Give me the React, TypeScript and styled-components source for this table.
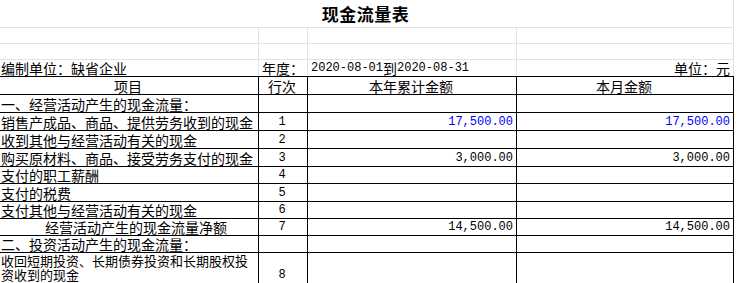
import React from "react";
import styled, { createGlobalStyle } from "styled-components";

const GlobalStyle = createGlobalStyle`
  body {
    margin: 0;
    background: #ffffff;
    font-family: "Noto Sans CJK SC", "Liberation Sans", sans-serif;
    color: #000000;
  }
`;

const GRID = "#e2e2e2";
const INK = "#000000";

const Sheet = styled.div`
  width: 734px;
  display: flex;
  flex-direction: column;
`;

const Row = styled.div<{ $h: number; $line: string }>`
  display: grid;
  grid-template-columns: 259px 49px 209px 217px;
  height: ${(p) => p.$h}px;
  border-bottom: 1px solid ${(p) => p.$line};
  box-sizing: border-box;
`;

const Cell = styled.div<{
  $line?: string;
  $align?: "left" | "center" | "right";
  $valign?: "start" | "center" | "end";
  $span?: boolean;
  $indent?: number;
}>`
  grid-column: ${(p) => (p.$span ? "1 / -1" : "auto")};
  display: flex;
  align-items: ${(p) => (p.$valign === "start" ? "flex-start" : p.$valign === "end" ? "flex-end" : "center")};
  justify-content: ${(p) => (p.$align === "center" ? "center" : p.$align === "right" ? "flex-end" : "flex-start")};
  border-right: 1px solid ${(p) => p.$line || INK};
  padding: 0 3px 0 ${(p) => (p.$indent ?? 1)}px;
  box-sizing: border-box;
  min-width: 0;
  white-space: nowrap;
  font-size: 14px;
  line-height: 16px;
`;

const Title = styled.span`
  font-size: 17px;
  font-weight: 700;
  letter-spacing: 0.5px;
  line-height: 20px;
`;

const Mono = styled.span<{ $blue?: boolean }>`
  font-family: "Liberation Mono", "Noto Sans CJK SC", monospace;
  font-size: 12px;
  line-height: 14px;
  color: ${(p) => (p.$blue ? "#0000ff" : INK)};
`;

const Wrap = styled.div`
  width: 254px;
  white-space: normal;
  word-break: break-all;
  font-size: 13px;
  line-height: 14px;
  padding-top: 1px;
`;

type Line = {
  label: string;
  no?: string;
  year?: string;
  month?: string;
  blue?: boolean;
  indent?: number;
  h: number;
};

const lines: Line[] = [
  { label: "一、经营活动产生的现金流量：", h: 18 },
  { label: "销售产成品、商品、提供劳务收到的现金", no: "1", year: "17,500.00", month: "17,500.00", blue: true, h: 18 },
  { label: "收到其他与经营活动有关的现金", no: "2", h: 18 },
  { label: "购买原材料、商品、接受劳务支付的现金", no: "3", year: "3,000.00", month: "3,000.00", h: 18 },
  { label: "支付的职工薪酬", no: "4", h: 17 },
  { label: "支付的税费", no: "5", h: 18 },
  { label: "支付其他与经营活动有关的现金", no: "6", h: 17 },
  { label: "经营活动产生的现金流量净额", no: "7", year: "14,500.00", month: "14,500.00", indent: 45, h: 17 },
  { label: "二、投资活动产生的现金流量：", h: 17 },
];

export default function App() {
  return (
    <>
      <GlobalStyle />
      <Sheet>
        <Row $h={28} $line={GRID}>
          <Cell $span $line={GRID} $align="center">
            <Title>现金流量表</Title>
          </Cell>
        </Row>
        {[0, 1].map((i) => (
          <Row key={i} $h={16} $line={GRID}>
            <Cell $line={GRID} />
            <Cell $line={GRID} />
            <Cell $line={GRID} />
            <Cell $line={GRID} />
          </Row>
        ))}
        <Row $h={17} $line={INK}>
          <Cell $line={GRID}>编制单位：缺省企业</Cell>
          <Cell $line={GRID} $indent={3}>年度：</Cell>
          <Cell $line={GRID} $indent={3}>
            <Mono>2020-08-01</Mono>到<Mono>2020-08-31</Mono>
          </Cell>
          <Cell $line={GRID} $align="right">单位：元</Cell>
        </Row>
        <Row $h={18} $line={INK}>
          <Cell $align="center">项目</Cell>
          <Cell $align="center">行次</Cell>
          <Cell $align="center">本年累计金额</Cell>
          <Cell $align="center">本月金额</Cell>
        </Row>
        {lines.map((l) => (
          <Row key={l.label} $h={l.h} $line={INK}>
            <Cell $indent={l.indent}>{l.label}</Cell>
            <Cell $align="center">{l.no && <Mono>{l.no}</Mono>}</Cell>
            <Cell $align="right">{l.year && <Mono $blue={l.blue}>{l.year}</Mono>}</Cell>
            <Cell $align="right">{l.month && <Mono $blue={l.blue}>{l.month}</Mono>}</Cell>
          </Row>
        ))}
        <Row $h={31} $line={INK}>
          <Cell $valign="start">
            <Wrap>收回短期投资、长期债券投资和长期股权投资收到的现金</Wrap>
          </Cell>
          <Cell $align="center" $valign="end">
            <Mono style={{ paddingBottom: 1 }}>8</Mono>
          </Cell>
          <Cell />
          <Cell />
        </Row>
      </Sheet>
    </>
  );
}
